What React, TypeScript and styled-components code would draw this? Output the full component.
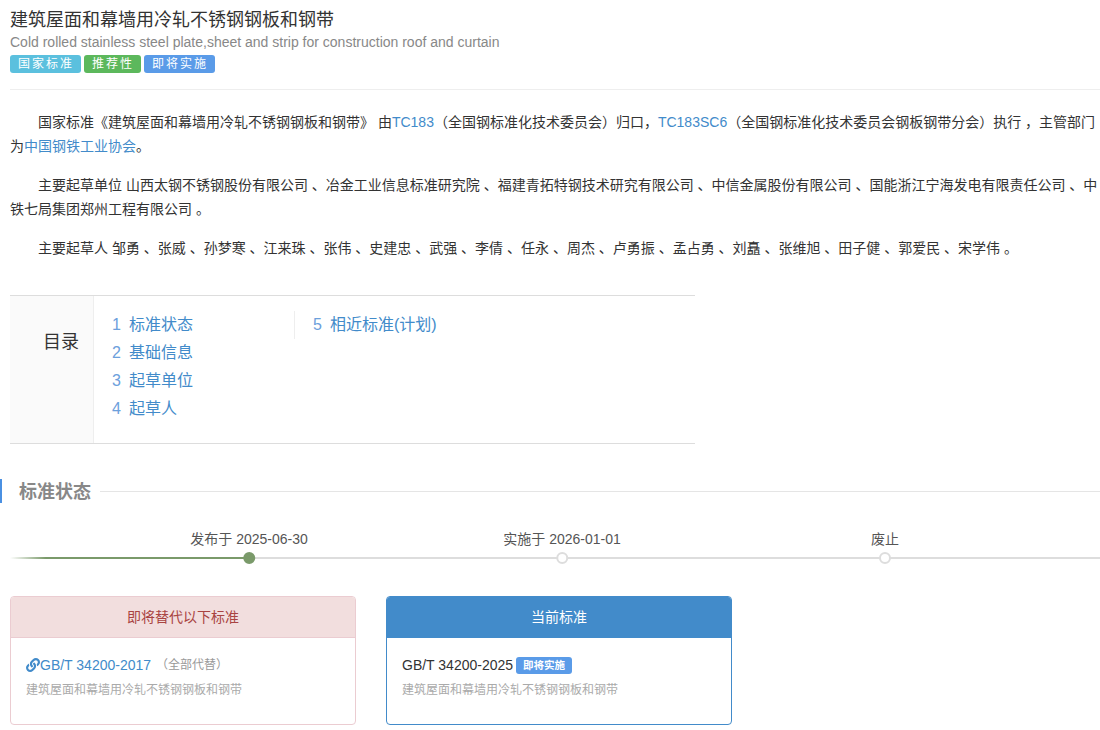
import React from "react";
import styled, { createGlobalStyle } from "styled-components";
import { FaLink } from "react-icons/fa";

const Global = createGlobalStyle`
  html, body { margin: 0; padding: 0; background: #fff; }
  body {
    font-family: "Liberation Sans", "Noto Sans CJK SC", sans-serif;
    font-size: 14px;
    line-height: 20px;
    color: #333;
    width: 1100px;
    height: 730px;
    overflow: hidden;
  }
  a { color: #428bca; text-decoration: none; }
  * { box-sizing: border-box; }
`;

const Page = styled.div`
  padding: 9px 0 0 10px;
`;
const Title = styled.h1`
  margin: 0;
  font-size: 18px;
  font-weight: 400;
  line-height: 22px;
  color: #333;
`;
const Subtitle = styled.div`
  margin-top: 1px;
  font-size: 14px;
  line-height: 20px;
  color: #888;
`;
const Labels = styled.div`
  display: flex;
  gap: 3px;
  height: 18px;
  margin-top: 3px;
`;
const Label = styled.span<{ $bg: string }>`
  display: block;
  height: 18px;
  padding: 0 7px 0 8px;
  border-radius: 3px;
  background: ${(p) => p.$bg};
  color: #fff;
  font-size: 12px;
  line-height: 18px;
  letter-spacing: 2px;
`;
const Rule = styled.hr`
  margin: 16px 0 20px;
  border: 0;
  border-top: 1px solid #eee;
`;
const Para = styled.p`
  margin: 0 0 15px 0;
  line-height: 24px;
  text-indent: 28px;
  color: #333;
`;
const Toc = styled.div`
  display: flex;
  width: 685px;
  height: 149px;
  margin-top: 35px;
  border-top: 1px solid #ddd;
  border-bottom: 1px solid #ddd;
`;
const TocHead = styled.div`
  width: 84px;
  padding: 32px 14px 0 0;
  text-align: right;
  background: #fafafa;
  border-right: 1px solid #eee;
  font-size: 18px;
  line-height: 28px;
`;
const TocCol = styled.div<{ $w: number }>`
  width: ${(p) => p.$w}px;
  height: 112px;
  margin-top: 15px;
  padding-left: 18px;
`;
const TocItem = styled.a`
  display: block;
  font-size: 16px;
  line-height: 28px;
  color: #428bca;
`;
const TocNum = styled.span`
  display: inline-block;
  width: 17px;
  color: #6ca0dc;
`;
const ColSep = styled.div`
  width: 1px;
  height: 28px;
  margin-top: 15px;
  background: #eee;
`;
const SectionHead = styled.div`
  display: flex;
  align-items: center;
  height: 24px;
  margin: 35px 0 0 -10px;
  border-left: 2px solid #4a90e2;
  padding-left: 17px;
`;
const SectionTitle = styled.h2`
  margin: 0;
  padding-top: 2px;
  font-size: 18px;
  font-weight: 700;
  color: #888;
  line-height: 24px;
`;
const SectionLine = styled.div`
  flex: 1;
  height: 1px;
  margin-left: 9px;
  background: #e5e5e5;
`;
const Timeline = styled.div`
  position: relative;
  height: 50px;
  margin-top: 26px;
`;
const Track = styled.div`
  position: absolute;
  left: 0;
  right: 0;
  top: 28px;
  height: 2px;
  background: #ddd;
`;
const TrackDone = styled.div<{ $w: number }>`
  width: ${(p) => p.$w}px;
  height: 2px;
  background: linear-gradient(to right, #fff, #7a9a6a 15%);
`;
const Step = styled.div<{ $x: number }>`
  position: absolute;
  left: ${(p) => p.$x - 10}px;
  top: 0;
  transform: translateX(-50%);
  display: flex;
  flex-direction: column;
  align-items: center;
  white-space: nowrap;
  color: #555;
  line-height: 20px;
`;
const Dot = styled.span<{ $done?: boolean }>`
  display: block;
  width: 12px;
  height: 12px;
  margin-top: 3px;
  border-radius: 50%;
  background: ${(p) => (p.$done ? "#7a9a6a" : "#fff")};
  border: 2px solid ${(p) => (p.$done ? "#7a9a6a" : "#ddd")};
`;
const Cards = styled.div`
  display: flex;
  gap: 30px;
  margin-top: 17px;
`;
const Card = styled.div<{ $border: string }>`
  width: 346px;
  height: 129px;
  border: 1px solid ${(p) => p.$border};
  border-radius: 4px;
  overflow: hidden;
`;
const CardHead = styled.div<{ $bg: string; $fg: string; $border: string }>`
  height: 41px;
  background: ${(p) => p.$bg};
  color: ${(p) => p.$fg};
  border-bottom: 1px solid ${(p) => p.$border};
  text-align: center;
  line-height: 40px;
`;
const CardBody = styled.div`
  padding: 17px 15px;
`;
const CardLine = styled.div`
  display: flex;
  align-items: center;
  height: 20px;
  color: #333;
`;
const CardLink = styled.a`
  display: flex;
  align-items: center;
  color: #428bca;
`;
const Replace = styled.span`
  margin-left: 5px;
  font-size: 12px;
  color: #999;
`;
const CardDesc = styled.div`
  margin-top: 5px;
  font-size: 12px;
  line-height: 20px;
  color: #aaa;
`;
const SmallBadge = styled.span`
  display: block;
  height: 17px;
  margin-left: 3px;
  padding: 0 7px;
  border-radius: 3px;
  background: #5a9be8;
  color: #fff;
  font-size: 10.5px;
  font-weight: 700;
  line-height: 17px;
`;

export default function App() {
  return (
    <Page>
      <Global />
      <Title>建筑屋面和幕墙用冷轧不锈钢钢板和钢带</Title>
      <Subtitle>Cold rolled stainless steel plate,sheet and strip for construction roof and curtain</Subtitle>
      <Labels>
        <Label $bg="#5bc0de">国家标准</Label>
        <Label $bg="#5cb85c">推荐性</Label>
        <Label $bg="#5a9be8">即将实施</Label>
      </Labels>
      <Rule />
      <Para>
        国家标准《建筑屋面和幕墙用冷轧不锈钢钢板和钢带》 由<a href="#">TC183</a>（全国钢标准化技术委员会）归口，<a href="#">TC183SC6</a>（全国钢标准化技术委员会钢板钢带分会）执行 ，主管部门为<a href="#">中国钢铁工业协会</a>。
      </Para>
      <Para>
        主要起草单位 山西太钢不锈钢股份有限公司 、冶金工业信息标准研究院 、福建青拓特钢技术研究有限公司 、中信金属股份有限公司 、国能浙江宁海发电有限责任公司 、中铁七局集团郑州工程有限公司 。
      </Para>
      <Para>
        主要起草人 邹勇 、张威 、孙梦寒 、江来珠 、张伟 、史建忠 、武强 、李倩 、任永 、周杰 、卢勇振 、孟占勇 、刘矗 、张维旭 、田子健 、郭爱民 、宋学伟 。
      </Para>
      <Toc>
        <TocHead>目录</TocHead>
        <TocCol $w={200}>
          <TocItem href="#"><TocNum>1</TocNum>标准状态</TocItem>
          <TocItem href="#"><TocNum>2</TocNum>基础信息</TocItem>
          <TocItem href="#"><TocNum>3</TocNum>起草单位</TocItem>
          <TocItem href="#"><TocNum>4</TocNum>起草人</TocItem>
        </TocCol>
        <ColSep />
        <TocCol $w={200}>
          <TocItem href="#"><TocNum>5</TocNum>相近标准(计划)</TocItem>
        </TocCol>
      </Toc>
      <SectionHead>
        <SectionTitle>标准状态</SectionTitle>
        <SectionLine />
      </SectionHead>
      <Timeline>
        <Track><TrackDone $w={239} /></Track>
        <Step $x={249}>发布于 2025-06-30<Dot $done /></Step>
        <Step $x={562}>实施于 2026-01-01<Dot /></Step>
        <Step $x={885}>废止<Dot /></Step>
      </Timeline>
      <Cards>
        <Card $border="#ebccd1">
          <CardHead $bg="#f2dede" $fg="#a94442" $border="#ebccd1">即将替代以下标准</CardHead>
          <CardBody>
            <CardLine>
              <CardLink href="#"><FaLink size={14} />GB/T 34200-2017</CardLink>
              <Replace>（全部代替）</Replace>
            </CardLine>
            <CardDesc>建筑屋面和幕墙用冷轧不锈钢钢板和钢带</CardDesc>
          </CardBody>
        </Card>
        <Card $border="#428bca">
          <CardHead $bg="#428bca" $fg="#fff" $border="#428bca">当前标准</CardHead>
          <CardBody>
            <CardLine>
              GB/T 34200-2025
              <SmallBadge>即将实施</SmallBadge>
            </CardLine>
            <CardDesc>建筑屋面和幕墙用冷轧不锈钢钢板和钢带</CardDesc>
          </CardBody>
        </Card>
      </Cards>
    </Page>
  );
}
